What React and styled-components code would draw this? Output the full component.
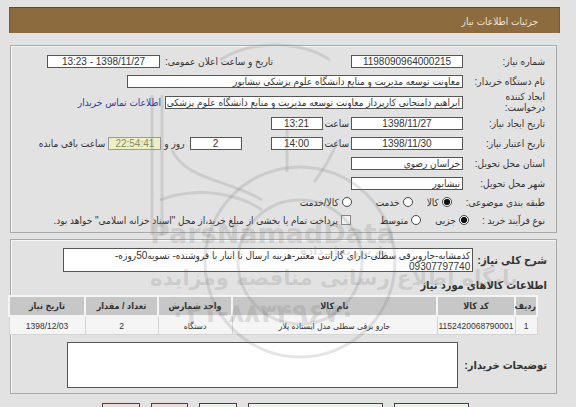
import styled, { createGlobalStyle } from "styled-components";

const FONT = `"Liberation Sans", "DejaVu Sans Condensed", "DejaVu Sans", sans-serif`;

const GlobalStyle = createGlobalStyle`
  html, body { margin: 0; padding: 0; background: #e2e2e2; }
  body { font-family: ${FONT}; color: #333; }
`;

const Page = styled.div`
  position: relative;
  width: 576px;
  height: 407px;
  overflow: hidden;
  direction: rtl;
  padding-top: 7px;
  box-sizing: border-box;
`;

const Header = styled.div`
  margin: 0 16px 0 9px;
  height: 26px;
  background: #8c6b3f;
  border-top: 1px solid #5b4b33;
  border-left: 1px solid #6e5a3c;
  border-right: 1px solid #6e5a3c;
  box-sizing: border-box;
  color: #efe6d6;
  font-size: 10px;
  padding: 8px 21px 0 0;
`;

const Box = styled.div`
  margin: ${({ $top }) => $top}px 19px 0 10px;
  height: ${({ $h }) => $h}px;
  border: 1px solid #a9a9a9;
  box-shadow: inset 1px 1px 0 #f6f6f6;
  box-sizing: border-box;
  padding: ${({ $pad }) => $pad};
`;

const Row = styled.div`
  display: flex;
  align-items: center;
  height: ${({ $h }) => $h || 20}px;
  font-size: 10px;
  white-space: nowrap;
`;

const Label = styled.div`
  width: 82px;
  flex-shrink: 0;
  line-height: 11px;
`;

const Field = styled.div`
  width: ${({ $w }) => $w}px;
  height: 13px;
  flex-shrink: 0;
  box-sizing: border-box;
  background: ${({ $bg }) => $bg || "#fff"};
  border: 1px solid ${({ $bd }) => $bd || "#555"};
  color: ${({ $color }) => $color || "#333"};
  font-size: 10px;
  line-height: 11px;
  text-align: ${({ $align }) => $align || "center"};
  padding: 0 2px;
  margin-right: ${({ $mr }) => $mr || 0}px;
  overflow: hidden;
`;

const Text = styled.span`
  margin-right: ${({ $mr }) => $mr || 0}px;
  margin-left: ${({ $ml }) => $ml || 0}px;
`;

const Link = styled.a`
  margin-right: 4px;
  color: #2a3c9c;
  text-decoration: none;
`;

const Radio = styled.span`
  display: inline-block;
  width: 10px;
  height: 10px;
  border-radius: 50%;
  border: 1px solid #444;
  box-sizing: border-box;
  flex-shrink: 0;
  background: ${({ $on }) =>
    $on ? "radial-gradient(circle, #111 0 2.8px, #fff 3.4px)" : "#fff"};
  margin-right: ${({ $mr }) => $mr || 0}px;
  margin-left: 3px;
`;

const Check = styled.span`
  display: inline-block;
  width: 10px;
  height: 10px;
  border: 1px solid #888;
  background: #f4f4f4;
  box-sizing: border-box;
  flex-shrink: 0;
  margin-right: ${({ $mr }) => $mr || 0}px;
  margin-left: 3px;
`;

const BoldLabel = styled.div`
  font-size: 11px;
  font-weight: bold;
  color: #333;
  margin-left: ${({ $ml }) => $ml || 0}px;
  flex-shrink: 0;
`;

const BlockRow = styled.div`
  display: flex;
  align-items: center;
  margin-top: ${({ $mt }) => $mt || 0}px;
`;

const TextBox = styled.div`
  width: ${({ $w }) => $w}px;
  height: ${({ $h }) => $h}px;
  background: #fff;
  border: 1px solid #555;
  box-sizing: border-box;
  font-size: 10px;
  line-height: 11px;
  padding: 1px 2px 0;
  color: #333;
  white-space: nowrap;
  overflow: hidden;
`;

const Table = styled.table`
  margin: 3px 9px 0 0;
  width: 528px;
  border-collapse: collapse;
  font-size: 9px;
  table-layout: fixed;
  th {
    background: #c7c7c7;
    height: 18px;
    border: 2px solid #f4f4f4;
    font-weight: bold;
    color: #333;
    padding: 0;
  }
  td {
    background: #f5f5f5;
    height: 17px;
    border: 1px solid #d4d4d4;
    text-align: center;
    color: #333;
    white-space: nowrap;
    padding: 0;
    font-size: 8.5px;
  }
`;

const Buttons = styled.div`
  display: flex;
  gap: 11px;
  padding-right: 107px;
  margin-top: 9px;
`;

const Button = styled.button`
  width: ${({ $w }) => $w}px;
  height: 22px;
  flex-shrink: 0;
  border: 1px solid #444;
  background: ${({ $pink }) => ($pink ? "#f7d9d9" : "#e6f4e2")};
`;

const Watermark = styled.div`
  position: absolute;
  inset: 0;
  pointer-events: none;
`;

const WmText = styled.div`
  position: absolute;
  left: ${({ $x }) => $x}px;
  top: ${({ $y }) => $y}px;
  font-size: ${({ $s }) => $s}px;
  font-weight: bold;
  color: rgba(110, 110, 110, 0.2);
  white-space: nowrap;
  direction: ${({ $dir }) => $dir || "rtl"};
  font-family: "DejaVu Sans", sans-serif;
`;

export default function App() {
  return (
    <>
      <GlobalStyle />
      <Page>
        <Header>جزئیات اطلاعات نیاز</Header>

        <Box $top={12} $h={188} $pad="5px 11px 0 0">
          <Row>
            <Label>شماره نیاز:</Label>
            <Field $w={112}>1198090964000215</Field>
            <Text $mr={78} $ml={5}>تاریخ و ساعت اعلان عمومی:</Text>
            <Field $w={113}>1398/11/27 - 13:23</Field>
          </Row>
          <Row>
            <Label>نام دستگاه خریدار:</Label>
            <Field $w={336} $align="right">
              معاونت توسعه مدیریت و منابع دانشگاه علوم پزشکی نیشابور
            </Field>
          </Row>
          <Row $h={22}>
            <Label>
              ایجاد کننده
              <br />
              درخواست:
            </Label>
            <Field $w={298} $align="right">
              ابراهیم دامنجانی  کارپرداز معاونت توسعه مدیریت و منابع دانشگاه علوم پزشکی
            </Field>
            <Link href="#">اطلاعات تماس خریدار</Link>
          </Row>
          <Row>
            <Label>تاریخ ایجاد نیاز:</Label>
            <Field $w={112}>1398/11/27</Field>
            <Text $mr={2} $ml={2}>ساعت</Text>
            <Field $w={52}>13:21</Field>
          </Row>
          <Row>
            <Label>تاریخ اعتبار نیاز:</Label>
            <Field $w={112}>1398/11/30</Field>
            <Text $mr={2} $ml={2}>ساعت</Text>
            <Field $w={52}>14:00</Field>
            <Field $w={52} $mr={29}>2</Field>
            <Text $mr={5} $ml={3}>روز و</Text>
            <Field $w={53} $bg="#efefc6" $bd="#9a9a9a" $color="#8c8c58">22:54:41</Field>
            <Text $mr={3}>ساعت باقی مانده</Text>
          </Row>
          <Row>
            <Label>استان محل تحویل:</Label>
            <Field $w={112} $align="right">خراسان رضوی</Field>
          </Row>
          <Row>
            <Label>شهر محل تحویل:</Label>
            <Field $w={112} $align="right">نیشابور</Field>
          </Row>
          <Row $h={18}>
            <Text>طبقه بندی موضوعی:</Text>
            <Radio $on $mr={14} />
            <Text>کالا</Text>
            <Radio $mr={14} />
            <Text>خدمت</Text>
            <Radio $mr={24} />
            <Text>کالا/خدمت</Text>
          </Row>
          <Row $h={18}>
            <Text>نوع فرآیند خرید :</Text>
            <Radio $on $mr={13} />
            <Text>جزیی</Text>
            <Radio $mr={14} />
            <Text>متوسط</Text>
            <Check $mr={29} />
            <Text>
              پرداخت تمام یا بخشی از مبلغ خرید،از محل "اسناد خزانه اسلامی" خواهد بود.
            </Text>
          </Row>
        </Box>

        <Box $top={6} $h={155} $pad="8px 9px 0 0">
          <BlockRow>
            <BoldLabel $ml={4}>شرح کلی نیاز:</BoldLabel>
            <TextBox $w={410} $h={24}>
              کدمشابه-جاروبرقی سطلی-دارای گارانتی معتبر-هزینه ارسال تا انبار با فروشنده- تسویه50روزه-
              <br />
              09307797740
            </TextBox>
          </BlockRow>
          <BlockRow $mt={7}>
            <BoldLabel>اطلاعات کالاهای مورد نیاز</BoldLabel>
          </BlockRow>
          <Table>
            <colgroup>
              <col style={{ width: 22 }} />
              <col style={{ width: 78 }} />
              <col style={{ width: 205 }} />
              <col style={{ width: 74 }} />
              <col style={{ width: 73 }} />
              <col style={{ width: 76 }} />
            </colgroup>
            <thead>
              <tr>
                <th>ردیف</th>
                <th>کد کالا</th>
                <th>نام کالا</th>
                <th>واحد شمارش</th>
                <th>تعداد / مقدار</th>
                <th>تاریخ نیاز</th>
              </tr>
            </thead>
            <tbody>
              <tr>
                <td>1</td>
                <td>1152420068790001</td>
                <td>جارو برقی سطلی مدل ایستاده پلار</td>
                <td>دستگاه</td>
                <td>2</td>
                <td>1398/12/03</td>
              </tr>
            </tbody>
          </Table>
          <BlockRow $mt={7}>
            <BoldLabel $ml={6}>توضیحات خریدار:</BoldLabel>
            <TextBox $w={391} $h={46} />
          </BlockRow>
        </Box>

        <Buttons>
          <Button $w={75} aria-label="مشاهده" />
          <Button $w={135} aria-label="ثبت پیشنهاد" />
          <Button $w={38} aria-label="چاپ" />
          <Button $w={37} $pink aria-label="بستن" />
          <Button $w={38} $pink aria-label="بازگشت" />
        </Buttons>

        <Watermark>
          <svg width="576" height="407" viewBox="0 0 576 407">
            <g fill="none" stroke="rgba(120,120,120,0.2)" strokeWidth="3">
              <line x1="152" y1="95" x2="152" y2="235" />
              <line x1="162" y1="95" x2="162" y2="235" />
              <circle cx="300" cy="262" r="95" />
              <circle cx="300" cy="262" r="62" />
              <path d="M172 150 C185 180 230 180 262 200" />
              <path d="M287 130 L287 172" />
              <path d="M338 140 C330 160 322 172 314 182" />
              <path d="M160 200 C200 185 240 195 262 210" />
              <path d="M220 60 C250 40 300 40 330 60" />
            </g>
          </svg>
          <WmText $x={150} $y={218} $s={27} $dir="ltr">ParsNamadData</WmText>
          <WmText $x={300} $y={244} $s={12}>پارس نماد داده</WmText>
          <WmText $x={150} $y={266} $s={21}>پایگاه اطلاع رسانی مناقصه ومزایده</WmText>
          <WmText $x={170} $y={298} $s={26}>۰۲۱-۸۸۳۴۹۶۷۰</WmText>
        </Watermark>
      </Page>
    </>
  );
}
